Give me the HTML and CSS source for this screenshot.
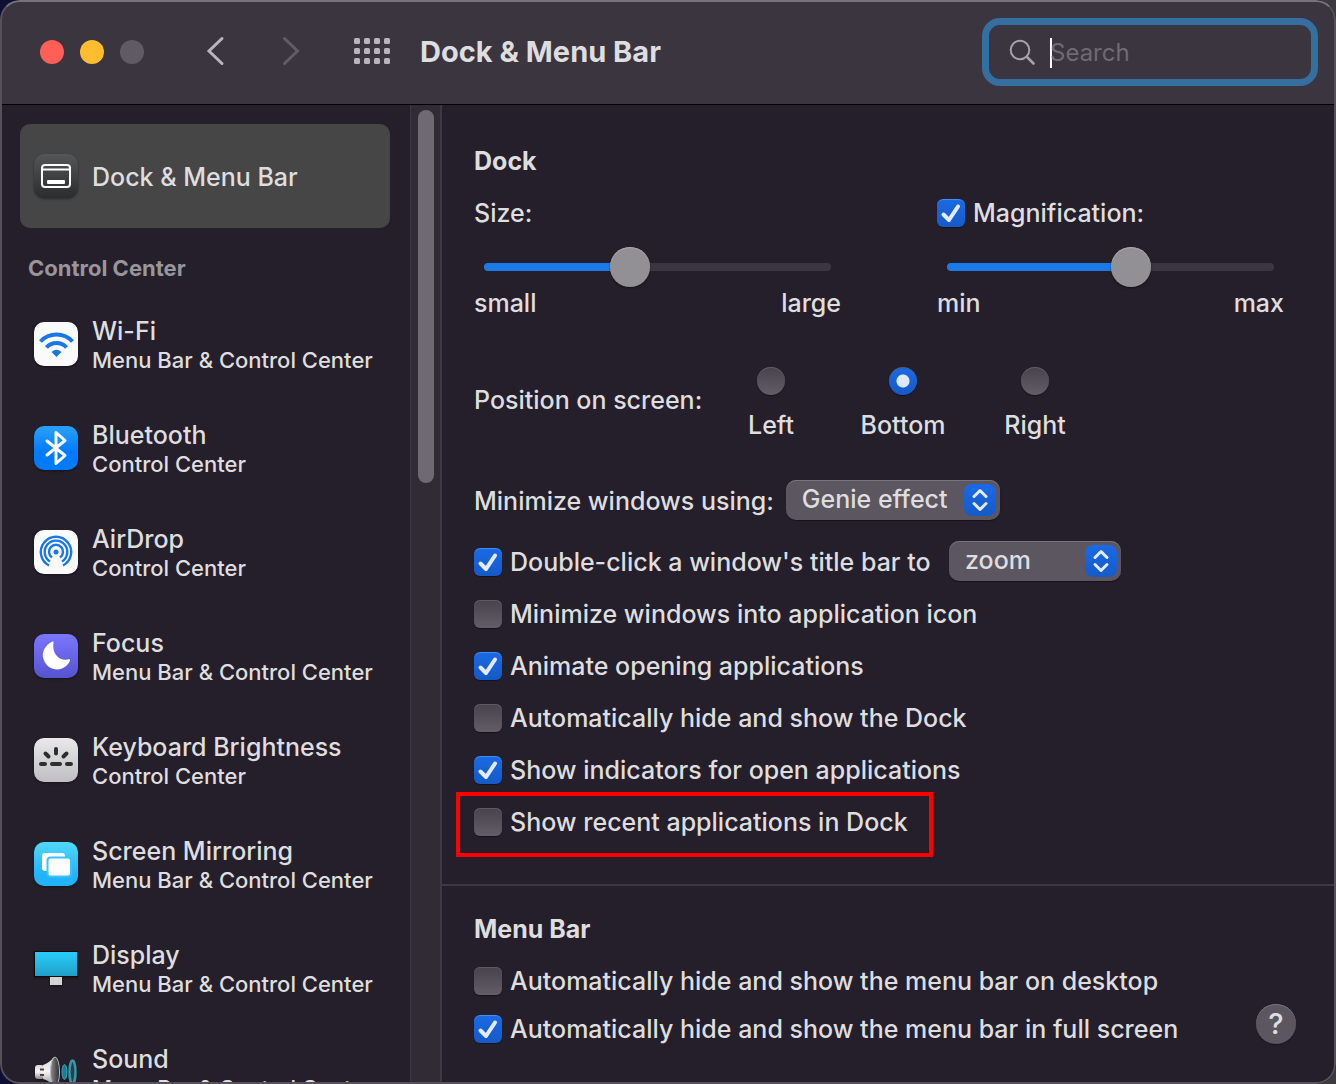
FILE: index.html
```html
<!DOCTYPE html>
<html lang="en">
<head>
<meta charset="utf-8">
<meta name="viewport" content="width=device-width, initial-scale=1">
<title>Dock &amp; Menu Bar</title>
<link rel="stylesheet" href="styles.css">
</head>
<body>
<div class="window">
  <header class="titlebar">
    <div class="lights">
      <button type="button" class="light light-close" aria-label="Close"></button>
      <button type="button" class="light light-minimize" aria-label="Minimize"></button>
      <button type="button" class="light light-zoom" aria-label="Zoom" disabled></button>
    </div>
    <nav class="history">
      <button type="button" class="icon-button" aria-label="Back">
        <svg width="32" height="32" viewBox="0 0 32 32" fill="none" stroke="#b9b4be" stroke-width="3" stroke-linecap="round" stroke-linejoin="miter"><path d="M22 2.500 L9 15 L22 27.500"/></svg>
      </button>
      <button type="button" class="icon-button" aria-label="Forward" disabled>
        <svg width="32" height="32" viewBox="0 0 32 32" fill="none" stroke="#615c66" stroke-width="3" stroke-linecap="round" stroke-linejoin="miter"><path d="M8.500 2.500 L21.500 15 L8.500 27.500"/></svg>
      </button>
    </nav>
    <button type="button" class="icon-button" aria-label="Show all">
      <svg width="36" height="28" viewBox="0 0 36 28" fill="#b9b4be">
        <rect x="0" y="0" width="6" height="6" rx="1.500"/><rect x="10" y="0" width="6" height="6" rx="1.500"/><rect x="20" y="0" width="6" height="6" rx="1.500"/><rect x="30" y="0" width="6" height="6" rx="1.500"/>
        <rect x="0" y="10" width="6" height="6" rx="1.500"/><rect x="10" y="10" width="6" height="6" rx="1.500"/><rect x="20" y="10" width="6" height="6" rx="1.500"/><rect x="30" y="10" width="6" height="6" rx="1.500"/>
        <rect x="0" y="20" width="6" height="6" rx="1.500"/><rect x="10" y="20" width="6" height="6" rx="1.500"/><rect x="20" y="20" width="6" height="6" rx="1.500"/><rect x="30" y="20" width="6" height="6" rx="1.500"/>
      </svg>
    </button>
    <h1 class="title">Dock &amp; Menu Bar</h1>
    <div class="search">
      <svg width="28" height="28" viewBox="0 0 28 28" fill="none" stroke="#a5a2a8" stroke-width="2" stroke-linecap="round"><circle cx="11" cy="12" r="9.300"/><path d="M18 19 L24.500 25.500" stroke-width="2.600"/></svg>
      <span class="caret"></span>
      <input class="search-input" type="text" placeholder="Search" aria-label="Search">
    </div>
  </header>

  <div class="body">
    <aside class="sidebar">
      <a class="item item-selected" href="#dock">
        <svg class="item-icon" viewBox="0 0 44 44">
          <defs><linearGradient id="g-dock" x2="0" y2="1"><stop offset="0" stop-color="#545658"/><stop offset="1" stop-color="#2b2c2d"/></linearGradient></defs>
          <rect width="44" height="44" rx="10" fill="url(#g-dock)"/>
          <rect x="8" y="11" width="28" height="22" rx="3" fill="none" stroke="#fff" stroke-width="2"/>
          <path d="M8 15.500h28" stroke="#fff" stroke-width="2"/>
          <rect x="13" y="26" width="18" height="4" rx="1" fill="#fff"/>
        </svg>
        <span class="item-text"><span class="item-name">Dock &amp; Menu Bar</span></span>
      </a>
      <h2 class="group">Control Center</h2>
      <a class="item" href="#wifi">
        <svg class="item-icon" viewBox="0 0 44 44">
          <rect width="44" height="44" rx="10" fill="#fafafa"/>
          <g fill="none" stroke="#1a78e6" stroke-width="4"><path d="M6.500 19.500A22 22 0 0 1 38.500 19.500"/><path d="M12.500 25.500A13.500 13.500 0 0 1 32.500 25.500"/></g>
          <path d="M22.500 35L17.500 30Q22.500 25.500 27.500 30Z" fill="#1a78e6"/>
        </svg>
        <span class="item-text"><span class="item-name">Wi-Fi</span><span class="item-place">Menu Bar &amp; Control Center</span></span>
      </a>
      <a class="item" href="#bluetooth">
        <svg class="item-icon" viewBox="0 0 44 44">
          <defs><linearGradient id="g-bt" x2="0" y2="1"><stop offset="0" stop-color="#2aa1ff"/><stop offset=".6" stop-color="#007bff"/><stop offset="1" stop-color="#007aff"/></linearGradient></defs>
          <rect width="44" height="44" rx="10" fill="url(#g-bt)"/>
          <path d="M13 15L31 29.500L22 37.500V6.500L31 14.500L13 29" fill="none" stroke="#fff" stroke-width="3" stroke-linecap="round" stroke-linejoin="round"/>
        </svg>
        <span class="item-text"><span class="item-name">Bluetooth</span><span class="item-place">Control Center</span></span>
      </a>
      <a class="item" href="#airdrop">
        <svg class="item-icon" viewBox="0 0 44 44">
          <rect width="44" height="44" rx="10" fill="#fafafa"/>
          <g fill="none" stroke="#1a78e6" stroke-width="2.400">
            <path d="M15 35.500A15.200 15.200 0 1 1 29 35.500"/>
            <path d="M16 31.500A11.300 11.300 0 1 1 28 31.500"/>
            <path d="M18 27.500A7 7 0 1 1 26 27.500"/>
          </g>
          <circle cx="22" cy="22" r="2.500" fill="#1a78e6"/>
        </svg>
        <span class="item-text"><span class="item-name">AirDrop</span><span class="item-place">Control Center</span></span>
      </a>
      <a class="item" href="#focus">
        <svg class="item-icon" viewBox="0 0 44 44">
          <defs><linearGradient id="g-focus" x2="0" y2="1"><stop offset="0" stop-color="#7a77ff"/><stop offset="1" stop-color="#5553cf"/></linearGradient></defs>
          <rect width="44" height="44" rx="10" fill="url(#g-focus)"/>
          <path d="M18.500 7.500C11 11 7 18.500 9.600 25.500C12.500 34 21.500 37.500 28.500 34.300C32.500 32.500 35 29.500 36 26.500C36.300 25.400 35.600 25 34.800 25.300C27 27.500 17.500 21.500 19.500 8.500C19.700 7.500 19.200 7.200 18.500 7.500Z" fill="#fff"/>
        </svg>
        <span class="item-text"><span class="item-name">Focus</span><span class="item-place">Menu Bar &amp; Control Center</span></span>
      </a>
      <a class="item" href="#keyboard">
        <svg class="item-icon" viewBox="0 0 44 44">
          <defs><linearGradient id="g-key" x2="0" y2="1"><stop offset="0" stop-color="#e9e9ea"/><stop offset="1" stop-color="#bfbfc3"/></linearGradient></defs>
          <rect width="44" height="44" rx="10" fill="url(#g-key)"/>
          <path d="M22 11v4.500M11.500 15.500l3 3M32.500 15.500l-3 3M7 26h4M18 26h8M33 26h4" stroke="#2f2f30" stroke-width="4" stroke-linecap="round"/>
        </svg>
        <span class="item-text"><span class="item-name">Keyboard Brightness</span><span class="item-place">Control Center</span></span>
      </a>
      <a class="item" href="#mirroring">
        <svg class="item-icon" viewBox="0 0 44 44">
          <defs><linearGradient id="g-mirror" x2="0" y2="1"><stop offset="0" stop-color="#51d8f7"/><stop offset=".75" stop-color="#22b3fd"/><stop offset="1" stop-color="#22b3fd"/></linearGradient></defs>
          <rect width="44" height="44" rx="10" fill="url(#g-mirror)"/>
          <rect x="8" y="11" width="23" height="18" rx="3" fill="#fff"/>
          <rect x="13.500" y="15.500" width="23.500" height="19" rx="3" fill="#fff" stroke="#39c3fa" stroke-width="2"/>
        </svg>
        <span class="item-text"><span class="item-name">Screen Mirroring</span><span class="item-place">Menu Bar &amp; Control Center</span></span>
      </a>
      <a class="item" href="#display">
        <svg class="item-icon" viewBox="0 0 44 44">
          <defs><linearGradient id="g-disp" x2="0" y2="1"><stop offset="0" stop-color="#29ceff"/><stop offset="1" stop-color="#1f9fc6"/></linearGradient></defs>
          <rect x="16" y="30" width="12" height="9" fill="#d3d3d5"/>
          <rect x=".5" y="5.500" width="43" height="25" fill="url(#g-disp)" stroke="#0b0b0d"/>
        </svg>
        <span class="item-text"><span class="item-name">Display</span><span class="item-place">Menu Bar &amp; Control Center</span></span>
      </a>
      <a class="item" href="#sound">
        <svg class="item-icon" viewBox="0 0 44 44">
          <defs>
            <linearGradient id="g-snd" x2="0" y2="1"><stop offset="0" stop-color="#d8d8d8"/><stop offset=".5" stop-color="#f4f4f4"/><stop offset="1" stop-color="#8b8b8d"/></linearGradient>
            <linearGradient id="g-cone" x2="1" y2="0"><stop offset="0" stop-color="#8d8d90"/><stop offset="1" stop-color="#2c2c2e"/></linearGradient>
          </defs>
          <rect x="1" y="15" width="9" height="14" rx="3" fill="url(#g-snd)"/>
          <path d="M9 15Q15 13 20 7V37Q15 30 9 29Z" fill="url(#g-snd)"/>
          <path d="M6 19.500h4M6 25h4" stroke="#444" stroke-width="2"/>
          <ellipse cx="21" cy="22" rx="4.500" ry="15" fill="url(#g-cone)" stroke="#b8b8ba" stroke-width="1"/>
          <ellipse cx="30.500" cy="22" rx="2.500" ry="7.500" fill="#1f7b8f" stroke="#2fa5bf"/>
          <ellipse cx="38.500" cy="22" rx="3" ry="11.500" fill="#263f4b" stroke="#3c94a9" stroke-width="2.500"/>
        </svg>
        <span class="item-text"><span class="item-name">Sound</span><span class="item-place">Menu Bar &amp; Control Center</span></span>
      </a>
    </aside>
    <div class="scrollbar"><div class="scroll-thumb"></div></div>

    <main class="content">
      <section class="panel">
        <h2 class="heading">Dock</h2>
        <div class="sliders">
          <div class="slider">
            <div class="slider-head"><label for="size">Size:</label></div>
            <input class="range" id="size" type="range" min="0" max="100" value="41" style="--fill: 42%">
            <div class="slider-ends"><span>small</span><span>large</span></div>
          </div>
          <div class="slider">
            <label class="check slider-head"><input class="box" type="checkbox" checked>Magnification:</label>
            <input class="range" type="range" min="0" max="100" value="57" aria-label="Magnification amount" style="--fill: 56%">
            <div class="slider-ends"><span>min</span><span>max</span></div>
          </div>
        </div>

        <div class="position" role="radiogroup" aria-labelledby="position-label">
          <span class="position-label" id="position-label">Position on screen:</span>
          <div class="choices">
            <label class="choice"><input class="radio" type="radio" name="position">Left</label>
            <label class="choice"><input class="radio" type="radio" name="position" checked>Bottom</label>
            <label class="choice"><input class="radio" type="radio" name="position">Right</label>
          </div>
        </div>

        <div class="row">
          <label for="effect">Minimize windows using:</label>
          <span class="popup popup-wide">
            <select class="select" id="effect"><option>Genie effect</option><option>Scale effect</option></select>
            <svg class="popup-mark" viewBox="0 0 32 32" fill="none" stroke="#e4ebfa" stroke-width="3" stroke-linecap="round" stroke-linejoin="round"><path d="M10 12.500L16 6.500L22 12.500M10 19.500L16 25.500L22 19.500"/></svg>
          </span>
        </div>
        <div class="row">
          <label class="check"><input class="box" type="checkbox" checked>Double-click a window's title bar to</label>
          <span class="popup popup-narrow">
            <select class="select" aria-label="Double-click action"><option>zoom</option><option>minimize</option></select>
            <svg class="popup-mark" viewBox="0 0 32 32" fill="none" stroke="#e4ebfa" stroke-width="3" stroke-linecap="round" stroke-linejoin="round"><path d="M10 12.500L16 6.500L22 12.500M10 19.500L16 25.500L22 19.500"/></svg>
          </span>
        </div>
        <div class="checks">
          <label class="check"><input class="box" type="checkbox">Minimize windows into application icon</label>
          <label class="check"><input class="box" type="checkbox" checked>Animate opening applications</label>
          <label class="check"><input class="box" type="checkbox">Automatically hide and show the Dock</label>
          <label class="check"><input class="box" type="checkbox" checked>Show indicators for open applications</label>
          <label class="check check-marked"><input class="box" type="checkbox">Show recent applications in Dock</label>
        </div>
      </section>

      <section class="panel panel-menubar">
        <div>
          <h2 class="heading">Menu Bar</h2>
          <div class="checks">
            <label class="check"><input class="box" type="checkbox">Automatically hide and show the menu bar on desktop</label>
            <label class="check"><input class="box" type="checkbox" checked>Automatically hide and show the menu bar in full screen</label>
          </div>
        </div>
        <button type="button" class="help" aria-label="Help">?</button>
      </section>
    </main>
  </div>
</div>
</body>
</html>
```

FILE: styles.css
```css
:root {
  --text: #dedddf;
  --bg: #241f2a;
  --bar: #3b353f;
  --control: #5c5660;
  --blue-top: #1a6ae6;
  --blue-bottom: #155ac8;
}

* {
  box-sizing: border-box;
}

body {
  margin: 0;
  background: linear-gradient(90deg, #0d1030, #3c3c3e);
  color: var(--text);
  font-family: Inter, "Liberation Sans", sans-serif;
  font-size: 25px;
  font-weight: 500;
  line-height: 30px;
}

h1,
h2 {
  margin: 0;
}

button,
input,
select {
  margin: 0;
  font: inherit;
  color: inherit;
}

button {
  padding: 0;
  border: 0;
  background: none;
}

.window {
  position: relative;
  display: flex;
  flex-direction: column;
  height: 100vh;
  overflow: hidden;
  border-radius: 20px;
  background: var(--bg);
}

/* Light rim drawn over the window's contents */
.window::after {
  content: "";
  position: absolute;
  inset: 0;
  border: 2px solid #55505a;
  border-top-color: #77737a;
  border-radius: 20px;
  pointer-events: none;
}

/* Title bar */
.titlebar {
  display: flex;
  flex: none;
  align-items: center;
  height: 105px;
  padding: 0 18px 0 40px;
  border-bottom: 1px solid #000;
  background: var(--bar);
}

.lights {
  display: flex;
  gap: 16px;
}

.light {
  width: 24px;
  height: 24px;
  border-radius: 50%;
}

.light-close { background: #ff5f57; }
.light-minimize { background: #febc2e; }
.light-zoom { background: #5f5a63; }

.history {
  display: flex;
  gap: 44px;
  margin: 0 46px 0 56px;
}

.icon-button,
.icon-button svg {
  display: block;
}

.title {
  margin-left: 30px;
  font-size: 29px;
  font-weight: 700;
}

.search {
  display: flex;
  align-items: center;
  width: 336px;
  height: 68px;
  margin-left: auto;
  padding: 0 14px 0 20px;
  border: 7px solid #356f9f;
  border-radius: 18px;
}

.caret {
  flex: none;
  width: 2px;
  height: 30px;
  margin: 2px -2px 0 13px;
  background: #fff;
}

.search-input {
  flex: 1;
  min-width: 0;
  padding: 2px 0 0;
  border: 0;
  outline: 0;
  background: none;
  font-size: 24px;
  font-weight: 400;
}

.search-input::placeholder {
  color: #6f6a73;
}

/* Sidebar */
.body {
  display: flex;
  flex: 1;
  min-height: 0;
}

.sidebar {
  flex: none;
  width: 410px;
  padding: 19px 20px 0;
  overflow: hidden;
}

.item {
  display: flex;
  align-items: center;
  gap: 14px;
  height: 104px;
  padding: 0 14px;
  border-radius: 10px;
  color: inherit;
  text-decoration: none;
  white-space: nowrap;
}

.item-selected {
  background: #464646;
}

.item-icon {
  flex: none;
  width: 44px;
  height: 44px;
  filter: drop-shadow(0 1px 1px #0006);
}

.item-text {
  display: flex;
  flex-direction: column;
  padding-top: 2px;
}

.item-place {
  font-size: 22px;
  line-height: 28px;
}

.group {
  height: 64px;
  padding: 25px 8px 0;
  color: #98959b;
  font-size: 22px;
  font-weight: 700;
}

.scrollbar {
  flex: none;
  width: 32px;
  padding: 5px 6px 0 7px;
  border-left: 1px solid #3d3843;
  border-right: 2px solid #3d3843;
  background: #312b36;
}

.scroll-thumb {
  width: 16px;
  height: 373px;
  border-radius: 8px;
  background: #6d6a71;
}

/* Settings */
.content {
  flex: 1;
  min-width: 0;
}

.panel {
  padding: 41px 52px 47px 32px;
}

.heading {
  font-size: 25px;
  font-weight: 700;
}

.sliders {
  display: grid;
  grid-template-columns: 366fr 346fr;
  gap: 96px;
  margin-top: 22px;
}

.slider {
  display: flex;
  flex-direction: column;
}

.slider-head {
  height: 30px;
}

.range {
  width: auto;
  height: 40px;
  margin: 19px 10px 1px;
  appearance: none;
  background: none;
}

.range::-webkit-slider-runnable-track {
  height: 8px;
  border-radius: 4px;
  background: linear-gradient(90deg, #1a7be8 var(--fill), #3c3641 var(--fill));
}

.range::-webkit-slider-thumb {
  width: 40px;
  height: 40px;
  margin-top: -16px;
  border-radius: 50%;
  appearance: none;
  background: #929095;
  box-shadow: 0 1px 2px #0008, inset 0 1px 1px #aaa8ad;
}

.slider-ends {
  display: flex;
  justify-content: space-between;
}

.position {
  display: flex;
  align-items: center;
  margin: 49px 0 40px;
}

.position-label {
  min-width: 231px;
  padding-bottom: 8px;
}

.choices {
  display: grid;
  grid-template-columns: repeat(3, 132px);
}

.choice {
  display: flex;
  flex-direction: column;
  align-items: center;
  gap: 15px;
}

.box,
.radio {
  flex: none;
  width: 28px;
  height: 28px;
  appearance: none;
  background: linear-gradient(#48424d, #625d67);
  box-shadow: 0 1px 1px #0006, inset 0 1px 0 #5f5a64;
}

.box {
  border-radius: 6px;
}

.radio {
  border-radius: 50%;
}

.box:checked {
  background:
    url("data:image/svg+xml,%3Csvg xmlns='http://www.w3.org/2000/svg' viewBox='0 0 28 28'%3E%3Cpath d='M6.500 15.500L12 21L21 7.500' fill='none' stroke='%23e4ebfa' stroke-width='4' stroke-linecap='round' stroke-linejoin='round'/%3E%3C/svg%3E"),
    linear-gradient(var(--blue-top), var(--blue-bottom));
  box-shadow: 0 1px 1px #0006, inset 0 1px 0 #4a8bee;
}

.radio:checked {
  background:
    radial-gradient(circle, #dfe8fa 6px, transparent 7px),
    linear-gradient(var(--blue-top), var(--blue-bottom));
}

.row {
  display: flex;
  align-items: center;
  gap: 12px;
  height: 40px;
  margin-bottom: 21px;
}

.row > label {
  padding-top: 2px;
}

.row > .check {
  min-width: 463px;
}

.popup {
  display: grid;
  align-items: center;
}

.popup-wide { width: 214px; }
.popup-narrow { width: 172px; }

.select,
.popup-mark {
  grid-area: 1 / 1;
}

.select {
  height: 40px;
  padding: 0 48px 2px 16px;
  border: 0;
  border-radius: 10px;
  appearance: none;
  background: var(--control);
  box-shadow: 0 1px 1px #0006, inset 0 1px 0 #77727b;
}

.popup-mark {
  justify-self: end;
  width: 32px;
  height: 32px;
  margin-right: 4px;
  border-radius: 8px;
  background: linear-gradient(var(--blue-top), var(--blue-bottom));
  pointer-events: none;
}

.checks {
  display: flex;
  flex-direction: column;
  align-items: flex-start;
  gap: 22px;
}

.row + .checks {
  margin-top: -3px;
}

.check {
  position: relative;
  display: flex;
  align-items: center;
  gap: 8px;
  white-space: nowrap;
}

/* Red frame around the option being pointed out */
.check-marked::after {
  content: "";
  position: absolute;
  inset: -15px -25px -20px -18px;
  border: 4px solid #ff0000;
  pointer-events: none;
}

.panel-menubar {
  display: flex;
  align-items: flex-end;
  justify-content: space-between;
  padding: 28px 40px 40px 32px;
  border-top: 2px solid #3c3742;
}

.panel-menubar .checks {
  gap: 18px;
  margin-top: 22px;
}

.help {
  flex: none;
  width: 40px;
  height: 40px;
  border-radius: 50%;
  background: var(--control);
  box-shadow: 0 1px 1px #0006, inset 0 1px 0 #77727b;
  font-size: 29px;
}
```
